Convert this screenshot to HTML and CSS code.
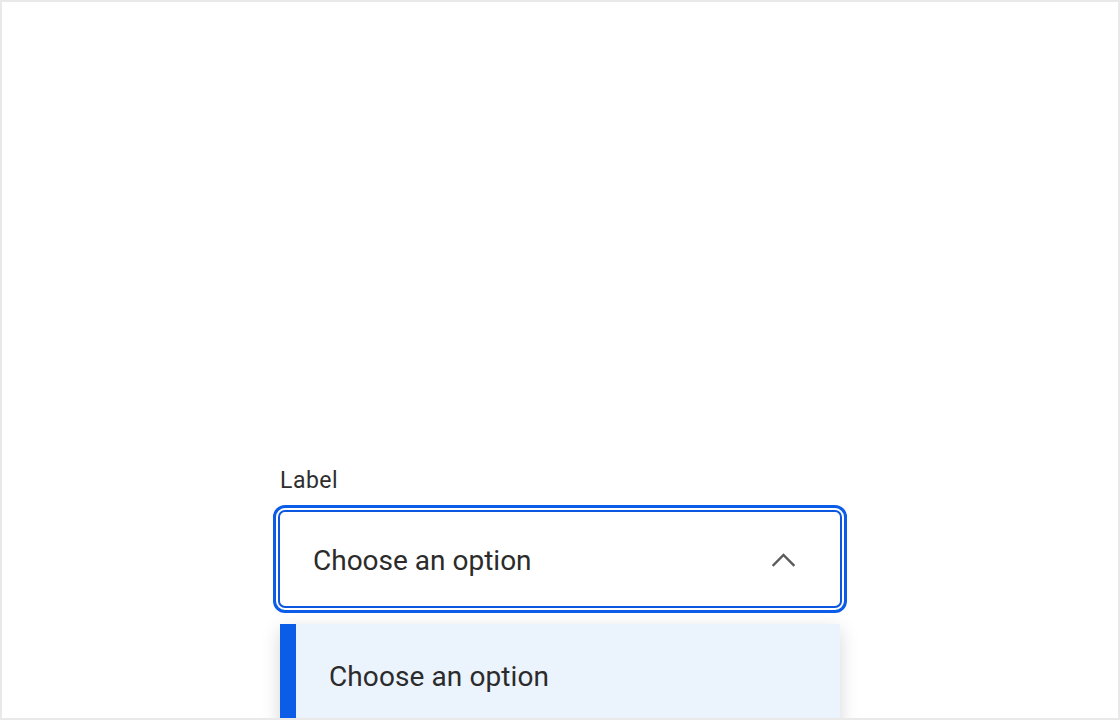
FILE: index.html
```html
<!DOCTYPE html>
<html lang="en">
<head>
<meta charset="utf-8">
<title>Select</title>
<link rel="stylesheet" href="styles.css">
</head>
<body>
<div class="page">
  <div class="field">
    <div class="label">Label</div>
    <div class="select">
      <span class="value">Choose an option</span>
      <svg class="chevron" width="24" height="16" viewBox="0 0 24 16" aria-hidden="true">
        <polyline points="2.5,13 12.5,3 22.5,13" fill="none" stroke="#5c5c5c" stroke-width="2.4" stroke-linecap="square"/>
      </svg>
    </div>
    <ul class="menu">
      <li class="option selected">Choose an option</li>
    </ul>
  </div>
</div>
</body>
</html>
```
FILE: styles.css
```css
html, body {
  margin: 0;
  padding: 0;
  background: #ffffff;
}
.page {
  box-sizing: border-box;
  width: 1120px;
  height: 720px;
  border: 2px solid #e9e9e9;
  overflow: hidden;
  padding: 466px 0 0 276px;
  font-family: Roboto, "Liberation Sans", sans-serif;
  color: #2b2b2b;
}
.field {
  display: flex;
  flex-direction: column;
  width: 564px;
}
.label {
  font-size: 23px;
  line-height: 26px;
  letter-spacing: 0.5px;
  padding-left: 2px;
  margin-bottom: 16px;
  color: #2e2e2e;
}
.select {
  box-sizing: border-box;
  height: 98px;
  border: 2px solid #0b57e0;
  border-radius: 7px;
  outline: 3px solid #0b5ce6;
  outline-offset: 2px;
  display: flex;
  align-items: center;
  justify-content: space-between;
  padding: 2px 45px 0 33px;
}
.value {
  font-size: 28px;
  color: #2b2b2b;
}
.chevron {
  display: block;
}
.menu {
  list-style: none;
  margin: 16px 0 0 2px;
  padding: 0;
  width: 560px;
  background: #ffffff;
  box-shadow: 0 6px 18px rgba(0, 0, 0, 0.16);
}
.option {
  box-sizing: border-box;
  height: 104px;
  display: flex;
  align-items: center;
  padding: 0 0 0 33px;
  font-size: 28px;
  letter-spacing: 0.1px;
  color: #2b2b2b;
  border-left: 16px solid #0b5ce6;
  background: #ebf3fd;
}
```
